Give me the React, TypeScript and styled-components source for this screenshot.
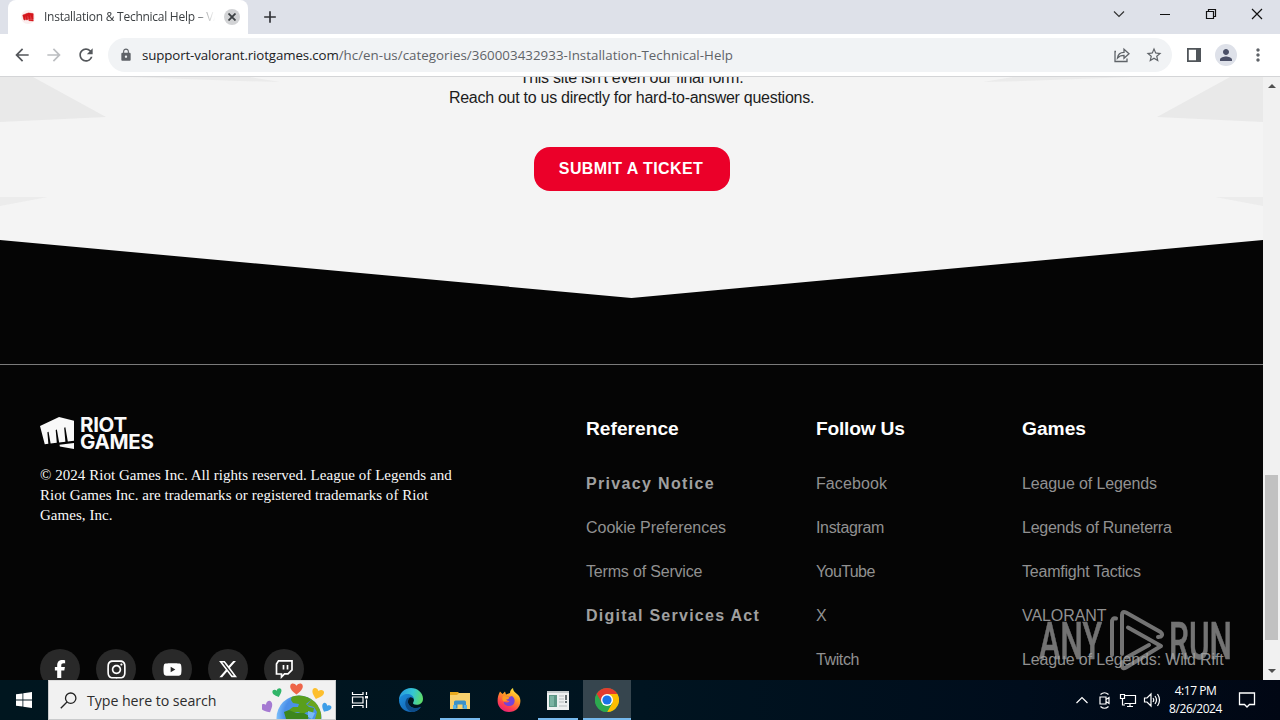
import React from "react";
import styled, { createGlobalStyle } from "styled-components";
import {
  MdArrowBack,
  MdArrowForward,
  MdRefresh,
  MdLock,
  MdStarBorder,
  MdMoreVert,
  MdPerson,
  MdAdd,
} from "react-icons/md";
import { FaFacebookF, FaInstagram, FaYoutube, FaXTwitter } from "react-icons/fa6";

const GlobalStyle = createGlobalStyle`
  * { box-sizing: border-box; }
  body { margin: 0; overflow: hidden; background: #000; }
  svg { display: block; flex: none; }
`;

const sans = `"Liberation Sans", Arial, sans-serif`;
const ui = `"Open Sans", "Noto Sans", sans-serif`;

const Screen = styled.div`
  width: 1280px;
  height: 720px;
  display: flex;
  flex-direction: column;
  overflow: hidden;
  font-family: ${sans};
`;

/* ---------- browser frame ---------- */
const TabStrip = styled.div`
  height: 34px;
  flex: none;
  display: flex;
  align-items: stretch;
  padding-left: 8px;
  background: #dee1e9;
`;
const Tab = styled.div`
  width: 240px;
  display: flex;
  align-items: center;
  padding: 0 8px 0 13px;
  border-radius: 8px 8px 0 0;
  background: #fff;
`;
const TabTitle = styled.div`
  width: 171px;
  margin-left: 9px;
  overflow: hidden;
  white-space: nowrap;
  font: 12px/18px ${ui};
  letter-spacing: -0.26px;
  color: #3c4043;
  mask-image: linear-gradient(90deg, #000 150px, transparent 171px);
`;
const TabClose = styled.div`
  width: 16px;
  height: 16px;
  margin-left: 9px;
  display: grid;
  place-items: center;
  border-radius: 50%;
  background: #d2d3d5;
`;
const NewTab = styled.div`
  width: 44px;
  display: grid;
  place-items: center;
  color: #303236;
`;
const WindowButtons = styled.div`
  margin-left: auto;
  display: grid;
  grid-template-columns: repeat(4, 46px);
  place-items: center;
  padding-bottom: 6px;
`;
const Toolbar = styled.div`
  height: 43px;
  flex: none;
  display: flex;
  align-items: center;
  padding: 0 12px 1px;
  border-bottom: 1px solid #d4d5d7;
  background: #fff;
  color: #5f6368;
`;
const NavButton = styled.div<{ $dim?: boolean }>`
  width: 20px;
  margin-right: 12px;
  display: grid;
  place-items: center;
  color: ${(p) => (p.$dim ? "#bcbec1" : "#54575b")};
`;
const AddressBar = styled.div`
  width: 1064px;
  flex: none;
  height: 34px;
  display: flex;
  align-items: center;
  padding: 0 9px 0 11px;
  border-radius: 17px;
  background: #f1f3f5;
`;
const Url = styled.div`
  flex: 1;
  margin-left: 9px;
  white-space: nowrap;
  font: 13.3px/20px ${ui};
  color: #5f6368;
`;
const UrlHost = styled.span`
  letter-spacing: -0.12px;
  color: #202124;
`;
const UrlPath = styled.span`
  letter-spacing: 0.045px;
`;
const AddressIcons = styled.div`
  display: flex;
  gap: 14px;
`;
const ToolbarIcons = styled.div`
  display: flex;
  align-items: center;
  gap: 12px;
  margin-left: 14px;
`;
const Avatar = styled.div`
  width: 22px;
  height: 22px;
  margin: 0 -1px 0 1px;
  display: grid;
  place-items: center;
  border-radius: 50%;
  background: #dee1e9;
  color: #4b5067;
`;

/* ---------- page ---------- */
const Viewport = styled.div`
  height: 603px;
  flex: none;
  display: flex;
`;
const Page = styled.div`
  position: relative;
  width: 1263px;
  height: 603px;
  overflow: hidden;
  background: #050505;
`;
const Scrollbar = styled.div`
  width: 17px;
  display: flex;
  flex-direction: column;
  align-items: center;
  justify-content: space-between;
  padding: 6px 0;
  background: #f1f1f1;
`;
const ScrollTrack = styled.div`
  flex: 1;
  width: 13px;
  padding-top: 386px;
`;
const ScrollThumb = styled.div`
  height: 165px;
  background: #c1c1c1;
`;
const Contact = styled.section`
  position: relative;
  height: 163px;
  display: flex;
  flex-direction: column;
  align-items: center;
  overflow: hidden;
  background: #f4f4f4;
`;
const Shards = styled.svg`
  position: absolute;
  inset: 0;
`;
const ContactText = styled.p`
  position: relative;
  margin: -9px 0 39px;
  text-align: center;
  font: 16px/20px ${sans};
  letter-spacing: -0.27px;
  color: #1c1c1c;
`;
const TicketButton = styled.button`
  position: relative;
  width: 196px;
  height: 44px;
  padding: 0 1px 0 0;
  border: 0;
  border-radius: 16px;
  background: #eb0029;
  color: #fff;
  font: bold 16px/20px ${sans};
  letter-spacing: 0.4px;
`;
const Chevron = styled.div`
  height: 58px;
  background: #f4f4f4;
  clip-path: polygon(0 0, 100% 0, 50% 100%);
`;
const Footer = styled.footer`
  height: 316px;
  margin-top: 66px;
  padding: 52px 0 0 40px;
  display: grid;
  grid-template-columns: 546px 230px 206px 1fr;
  border-top: 1px solid #7b7b7b;
`;
const Brand = styled.div`
  display: flex;
  flex-direction: column;
`;
const Logo = styled.div`
  display: flex;
  gap: 6px;
  height: 32px;
  color: #f9f9f9;
`;
const LogoText = styled.div`
  margin-top: -1px;
  font: bold 20.5px/17px Inter, ${sans};
  letter-spacing: -0.3px;
  white-space: pre-line;
`;
const Legal = styled.p`
  width: 420px;
  height: 60px;
  margin: 16px 0 124px;
  font: 15px/20px "Liberation Serif", "Times New Roman", serif;
  letter-spacing: 0.04px;
  color: #f9f9f9;
`;
const Socials = styled.div`
  display: flex;
  gap: 16px;
`;
const Social = styled.div`
  width: 40px;
  height: 40px;
  display: grid;
  place-items: center;
  border-radius: 50%;
  background: #292929;
  color: #fff;
`;
const LinkColumn = styled.div`
  display: flex;
  flex-direction: column;
  white-space: nowrap;
`;
const LinkHeading = styled.h3<{ $track?: number }>`
  margin: 0 0 33px;
  font: bold 19.2px/24px ${sans};
  letter-spacing: ${(p) => p.$track ?? 0}px;
  color: #fff;
`;
const FooterLink = styled.a<{ $strong?: boolean; $track?: number }>`
  height: 44px;
  font: ${(p) => (p.$strong ? "bold" : "normal")} 16px/20px ${sans};
  letter-spacing: ${(p) => p.$track ?? 0}px;
  color: ${(p) => (p.$strong ? "#a0a0a0" : "#919191")};
`;
const Watermark = styled.svg`
  position: absolute;
  left: 1030px;
  top: 523px;
  opacity: 0.7;
`;

/* ---------- taskbar ---------- */
const Taskbar = styled.div`
  height: 40px;
  flex: none;
  display: flex;
  background: linear-gradient(90deg, #00161f 0%, #001420 50%, #000d1c 80%, #010714 100%);
`;
const Start = styled.div`
  width: 48px;
  display: grid;
  place-items: center;
`;
const Search = styled.div`
  width: 288px;
  display: flex;
  align-items: center;
  padding-left: 11px;
  border: 1px solid #c9cbcc;
  border-top-color: #dcdcdc;
  background: #f1f1f1;
`;
const SearchText = styled.div`
  width: 175px;
  margin: 1px 0 0 10px;
  font: 14.2px/20px ${ui};
  letter-spacing: -0.06px;
  color: #2d2d2d;
  white-space: nowrap;
`;
const Tasks = styled.div`
  display: flex;
`;
const TaskItem = styled.div<{ $open?: boolean; $active?: boolean }>`
  width: ${(p) => (p.$active ? "48px" : "49px")};
  display: grid;
  place-items: center;
  position: relative;
  background: ${(p) => (p.$active ? "#36454e" : "transparent")};
  &:first-child {
    width: 48px;
    margin-right: 2px;
  }
  &:last-child {
    margin-left: 1px;
  }
  &::after {
    content: "";
    position: absolute;
    left: ${(p) => (p.$active ? "0" : "5px")};
    right: ${(p) => (p.$active ? "0" : "4px")};
    bottom: 0;
    height: 2px;
    background: ${(p) => (p.$open || p.$active ? "#76b9ed" : "transparent")};
  }
`;
const Tray = styled.div`
  margin-left: auto;
  display: flex;
  align-items: center;
  color: #fff;
`;
const TrayIcons = styled.div`
  display: flex;
  align-items: center;
  gap: 6px;
`;
const Clock = styled.div`
  width: 69px;
  text-align: center;
  font: 12px/18px ${ui};
  letter-spacing: -0.45px;
`;
const Notice = styled.div`
  margin: 0 24px 0 8px;
`;

const FIST =
  "M13.458.86 0 7.093l3.353 12.761 2.552-.313-.701-8.024.838-.373 1.447 8.202 4.361-.535-.775-8.857.83-.37 1.591 9.025 4.412-.542-.849-9.708.84-.374 1.74 9.87L24 17.318V3.5Zm.316 19.356.222 1.256L24 23.14v-4.18l-10.22 1.256Z";

const Fist = ({ w, h }: { w: number; h: number }) => (
  <svg width={w} height={h} viewBox="0 .86 24 22.28" preserveAspectRatio="none">
    <path d={FIST} fill="currentColor" />
  </svg>
);

const Favicon = () => (
  <svg width="14" height="14" viewBox="0 0 14 14">
    <circle cx="7" cy="7" r="7" fill="#fbeeee" />
    <svg x="1.500" y="2.500" width="11" height="9" viewBox="0 0 24 24" preserveAspectRatio="none">
      <path d={FIST} fill="#d5161c" stroke="#d5161c" strokeWidth="1.5" />
    </svg>
  </svg>
);

const Earth = () => (
  <svg width="72" height="38" viewBox="0 0 72 38">
    <defs>
      <radialGradient id="sea" cx=".6" cy=".4" r=".6">
        <stop offset="0" stopColor="#4a94ea" />
        <stop offset=".7" stopColor="#4a8fe8" />
        <stop offset="1" stopColor="#7cc0fb" />
      </radialGradient>
      <clipPath id="globe"><circle cx="37" cy="37" r="22.500" /></clipPath>
      <path id="heart" d="M0 5C-5 1-6-1-5.5-3.2-5-5.4-1.6-5.6 0-3 1.6-5.6 5-5.4 5.500-3.200 6-1 5 1 0 5Z" />
    </defs>
    <circle cx="37" cy="37" r="22.500" fill="url(#sea)" />
    <g clipPath="url(#globe)">
      <path d="M30 14H45L49 19 44 23 47 26 52 27 51 32 45 31 41 33 36 31 31 32 27 29 31 26 36 26 37 23 31 22 29 19Z" fill="#5a9f1c" />
      <path d="M45 14C56 18 61 28 59 38L53 38 55 31 52 26 45 24 49 19Z" fill="#6aa51d" />
      <path d="M22 31 27 29 34 32 42 32 47 35 46 38H24Z" fill="#3c861c" />
      <path d="M46 30 53 32 50 38 46 36Z" fill="#79baf5" />
    </g>
    <use href="#heart" transform="translate(34.500 8) scale(1.120)" fill="#ee6549" />
    <use href="#heart" transform="translate(15.500 12) rotate(-18) scale(.820)" fill="#31b568" />
    <use href="#heart" transform="translate(55.500 13) rotate(18) scale(1.050)" fill="#fdbf2d" />
    <use href="#heart" transform="translate(5.500 26.500) rotate(-28) scale(1.080)" fill="#a57ad2" />
    <use href="#heart" transform="translate(64 27) rotate(28) scale(.850)" fill="#3d9ee8" />
  </svg>
);

const TaskView = () => (
  <svg width="18" height="18" viewBox="0 0 18 18" fill="none" stroke="#fff" strokeWidth="1.200">
    <path d="M1.500 1v2.500h10.500V1M1.500 17v-2.500H12V17M1.500 6H12v6H1.500ZM15.500 1v3M15.500 8.500V17" />
    <path d="M14 5h3v2.500h-3z" fill="#fff" stroke="none" />
  </svg>
);

const Edge = () => (
  <svg width="24" height="24" viewBox="0 0 24 24">
    <defs>
      <linearGradient id="edgeTop" x1="0" y1=".3" x2="1" y2=".5">
        <stop offset="0" stopColor="#2799e0" />
        <stop offset=".55" stopColor="#34c5d4" />
        <stop offset="1" stopColor="#5ddc69" />
      </linearGradient>
      <linearGradient id="edgeLow" x1="0" y1="0" x2="1" y2="1">
        <stop offset="0" stopColor="#1b8fdd" />
        <stop offset="1" stopColor="#1257a4" />
      </linearGradient>
    </defs>
    <path d="M0 12C0 5 5.500 0 12 0s12 4.800 12 10.800c0 4-3 6-6.500 6-3 0-4-1.200-3.300-2.300 2-3-.2-6.700-4.200-6.700C5.500 7.800 1 10 0 12Z" fill="url(#edgeTop)" />
    <path d="M0 12C1 7.800 5 6 8.500 6c4 0 6.500 2.500 6.300 5.500C14 9.800 12.500 9 11.300 9.300 7 11 8 19 15 20c3 .4 5.500-.4 7-1.300C20 22 16.500 24 12 24 5 24 0 18.500 0 12Z" fill="url(#edgeLow)" />
    <path d="M7.500 11c-3 5 0 11.500 5.500 12.900 4-.2 7-2.400 9-5.200-4 2.200-9 1.800-11.600-1.200C8.500 15.300 8.300 12 11.300 9.300 9.600 9.300 8.300 10 7.500 11Z" fill="#0d4c88" />
  </svg>
);

const Folder = () => (
  <svg width="22" height="20" viewBox="0 0 22 20">
    <path d="M1 2h8l2 2h10v14H1Z" fill="#e8a91d" />
    <path d="M1 5h7l2-2h11v16H1Z" fill="#f8d06c" />
    <path d="M5 18.500v-6.500q0-1.500 1.500-1.500h9q1.500 0 1.500 1.500v6.500h-3.500V14.500h-5v4Z" fill="#3b91c8" />
    <path d="M4 15h3v4H4zM15 15h3v4h-3z" fill="#59b3e5" />
  </svg>
);

const Firefox = () => (
  <svg width="24" height="24" viewBox="0 0 24 24">
    <defs>
      <linearGradient id="fox" x1=".8" y1="0" x2=".3" y2="1">
        <stop offset="0" stopColor="#fff13e" />
        <stop offset=".4" stopColor="#ff9a24" />
        <stop offset=".75" stopColor="#ff4050" />
        <stop offset="1" stopColor="#e62177" />
      </linearGradient>
    </defs>
    <path d="M3 3.500 5.500 6 8 3.500l1 3L13 5c0-2 1-4 3-5 0 3 2 4 4 6 2 1.500 3.500 4 3.400 7C23.400 19.500 18.500 24 12 24S.6 19 .6 13c0-4 .8-6.500 2.400-9.500Z" fill="url(#fox)" />
    <path d="M7 10c2-1 3-1.500 5-1l3-1c2 1.500 3 3.500 2.500 6-.5 2.500-2.500 4-5.500 4s-5.500-2-5.300-4.500C8 15 11 15 12.500 13 10 13 9 11 7 10Z" fill="#7543d8" />
    <path d="M6 8c2 0 4 .5 6.500 1.500-.5 1.500-2 2-3.500 2L10 13l-3.500.5C5 12 5 10 6 8Z" fill="#ff9b22" />
  </svg>
);

const AppWindow = () => (
  <svg width="22" height="19" viewBox="0 0 22 19">
    <path d="M0 0h22v19H0z" fill="#eef0f0" />
    <path d="M0 0h22v2H0z" fill="#c6cccd" />
    <path d="M2 4h8v12H2z" fill="#5c9685" />
    <path d="M3 5h4v10H3z" fill="#7bb3a2" />
    <path d="M12 5h5M12 8h5M12 11h5M12 15h8" stroke="#b5bbbc" />
    <path d="M19 4v5M19 10v2" stroke="#384447" strokeWidth="1.500" />
  </svg>
);

const Chrome = () => (
  <svg width="24" height="24" viewBox="0 0 24 24">
    <circle cx="12" cy="12" r="12" fill="#2da94f" />
    <path d="M12 12 1.600 6A12 12 0 0 1 22.400 6Z" fill="#e33b2e" />
    <path d="M12 6H22.400A12 12 0 0 1 12 24L17.200 15Z" fill="#fdbd00" />
    <path d="M1.600 6 6.800 15 12 12 12 6Z" fill="#e33b2e" />
    <path d="M1.600 6 6.800 15 12 18 17.200 15 12 24A12 12 0 0 1 1.600 6Z" fill="#2da94f" />
    <circle cx="12" cy="12" r="6" fill="#fff" />
    <circle cx="12" cy="12" r="4.600" fill="#1a73e8" />
  </svg>
);

const Twitch = () => (
  <svg width="20" height="20" viewBox="0 0 20 20" fill="none" stroke="#fff" strokeWidth="1.700">
    <path d="M4.500 1.900H18v9l-4 4h-3.500L7.500 18v-3H2.500V5Z" />
    <path d="M9.500 6v4.500M13.500 6v4.500" />
  </svg>
);

type Item = { label: string; strong?: boolean; track?: number };
const columns: { title: string; track?: number; links: Item[] }[] = [
  {
    title: "Reference",
    links: [
      { label: "Privacy Notice", strong: true, track: 1.34 },
      { label: "Cookie Preferences", track: -0.03 },
      { label: "Terms of Service", track: -0.18 },
      { label: "Digital Services Act", strong: true, track: 1.26 },
    ],
  },
  {
    title: "Follow Us",
    track: -0.22,
    links: [
      { label: "Facebook", track: 0.1 },
      { label: "Instagram", track: -0.35 },
      { label: "YouTube", track: -0.6 },
      { label: "X" },
      { label: "Twitch", track: -0.38 },
    ],
  },
  {
    title: "Games",
    links: [
      { label: "League of Legends", track: -0.12 },
      { label: "Legends of Runeterra", track: -0.26 },
      { label: "Teamfight Tactics", track: -0.22 },
      { label: "VALORANT", track: -0.08 },
      { label: "League of Legends: Wild Rift", track: -0.14 },
    ],
  },
];

export default function App() {
  return (
    <Screen>
      <GlobalStyle />
      <TabStrip>
        <Tab>
          <Favicon />
          <TabTitle>Installation &amp; Technical Help – VALORANT</TabTitle>
          <TabClose>
            <svg width="8" height="8" viewBox="0 0 8 8" stroke="#3c4043" strokeWidth="1.800"><path d="m.5.5 7 7M7.500.5l-7 7" /></svg>
          </TabClose>
        </Tab>
        <NewTab><MdAdd size={20} /></NewTab>
        <WindowButtons>
          <svg width="12" height="12" viewBox="0 0 12 12" fill="none" stroke="#333" strokeWidth="1.200"><path d="m1 3.500 5 5 5-5" /></svg>
          <svg width="12" height="12" viewBox="0 0 12 12" stroke="#111"><path d="M1 6.500h10" /></svg>
          <svg width="12" height="12" viewBox="0 0 12 12" fill="none" stroke="#111" strokeWidth="1.200"><path d="M1.500 3.500h7v7h-7zM3.500 3.500v-2h7v7h-2" /></svg>
          <svg width="12" height="12" viewBox="0 0 12 12" stroke="#111" strokeWidth="1.200"><path d="m1 1 10 10M11 1 1 11" /></svg>
        </WindowButtons>
      </TabStrip>
      <Toolbar>
        <NavButton><MdArrowBack size={20} /></NavButton>
        <NavButton $dim><MdArrowForward size={20} /></NavButton>
        <NavButton><MdRefresh size={20} /></NavButton>
        <AddressBar>
          <MdLock size={14} />
          <Url>
            <UrlHost>support-valorant.riotgames.com</UrlHost>
            <UrlPath>/hc/en-us/categories/360003432933-Installation-Technical-Help</UrlPath>
          </Url>
          <AddressIcons>
            <svg width="18" height="18" viewBox="0 0 18 18" fill="none" stroke="#5f6368" strokeWidth="1.300">
              <path d="M3 5.500H2v10h12v-3M4.500 12c.5-4 3-5.700 6.500-5.700V3.200l5 4.500-5 4.500V9.300c-3 0-4.800.7-6.500 2.700Z" />
            </svg>
            <MdStarBorder size={18} />
          </AddressIcons>
        </AddressBar>
        <ToolbarIcons>
          <svg width="16" height="14" viewBox="0 0 16 14"><path d="M1.900.9h12.200v12.200H1.900z" fill="none" stroke="#50555a" strokeWidth="1.800" /><path d="M10 0h5v14h-5z" fill="#50555a" /></svg>
          <Avatar><MdPerson size={18} /></Avatar>
          <MdMoreVert size={20} />
        </ToolbarIcons>
      </Toolbar>

      <Viewport>
        <Page>
          <Contact>
            <Shards width="1263" height="163" viewBox="0 0 1263 163">
              <g fill="#e9e9e9">
                <path d="M0 0H33L106 40 0 45ZM1263 0H1230L1157 40 1263 45Z" />
                <path d="M0 120H48L0 129ZM1263 120H1215L1263 129Z" fill="#ececec" />
                <path d="M130 0H250L280 5 240 4ZM1133 0H1013L983 5 1023 4Z" fill="#ebebeb" />
              </g>
            </Shards>
            <ContactText>
              This site isn't even our final form.
              <br />
              Reach out to us directly for hard-to-answer questions.
            </ContactText>
            <TicketButton>SUBMIT A TICKET</TicketButton>
          </Contact>
          <Chevron />
          <Footer>
            <Brand>
              <Logo>
                <Fist w={34} h={32} />
                <LogoText>{"RIOT\nGAMES"}</LogoText>
              </Logo>
              <Legal>
                © 2024 Riot Games Inc. All rights reserved. League of Legends and Riot Games Inc. are trademarks or
                registered trademarks of Riot Games, Inc.
              </Legal>
              <Socials>
                <Social><FaFacebookF size={18} /></Social>
                <Social><FaInstagram size={21} /></Social>
                <Social><FaYoutube size={19} /></Social>
                <Social><FaXTwitter size={20} /></Social>
                <Social><Twitch /></Social>
              </Socials>
            </Brand>
            {columns.map((c) => (
              <LinkColumn key={c.title}>
                <LinkHeading $track={c.track}>{c.title}</LinkHeading>
                {c.links.map((l) => (
                  <FooterLink key={l.label} $strong={l.strong} $track={l.track}>{l.label}</FooterLink>
                ))}
              </LinkColumn>
            ))}
          </Footer>
          <Watermark width="210" height="80" viewBox="0 0 210 80">
            <g fill="#a2a2a2" stroke="#a2a2a2" strokeWidth=".6" fontFamily="Roboto, sans-serif" fontSize="52" fontWeight="500">
              <text x="9" y="59" textLength="63" lengthAdjust="spacingAndGlyphs">ANY</text>
              <text x="139" y="59" textLength="63" lengthAdjust="spacingAndGlyphs">RUN</text>
            </g>
            <g fill="none" stroke="#a2a2a2" strokeWidth="4" strokeLinejoin="round" strokeLinecap="round">
              <path d="M86 18.500q-4-1-4 4V55" />
              <path d="M92 54V15q0-4.500 4-2.500L130.500 32q3 2.500.500 4.500l-3 .5" />
              <path d="M98 27.500 131 46 96 67.500q-3.500 2-4-1.500V62" />
              <path d="M96.500 57.500 119 45" />
            </g>
          </Watermark>
        </Page>
        <Scrollbar>
          <svg width="8" height="6" viewBox="0 0 8 6"><path d="M0 5 4 1l4 4Z" fill="#505050" /></svg>
          <ScrollTrack><ScrollThumb /></ScrollTrack>
          <svg width="8" height="6" viewBox="0 0 8 6"><path d="m0 1 4 4 4-4Z" fill="#505050" /></svg>
        </Scrollbar>
      </Viewport>

      <Taskbar>
        <Start>
          <svg width="16" height="16" viewBox="0 0 16 16" fill="#fff"><path d="M0 2.300 6.500 1.400v6.200H0ZM7.300 1.300 16 0v7.600H7.300ZM0 8.400h6.500v6.200L0 13.700ZM7.300 8.400H16V16l-8.700-1.300Z" /></svg>
        </Start>
        <Search>
          <svg width="17" height="17" viewBox="0 0 17 17" fill="none" stroke="#222" strokeWidth="1.300"><circle cx="10.700" cy="6.200" r="5.200" /><path d="M7 10 .8 16.200" /></svg>
          <SearchText>Type here to search</SearchText>
          <Earth />
        </Search>
        <Tasks>
          <TaskItem><TaskView /></TaskItem>
          <TaskItem><Edge /></TaskItem>
          <TaskItem $open><Folder /></TaskItem>
          <TaskItem><Firefox /></TaskItem>
          <TaskItem $open><AppWindow /></TaskItem>
          <TaskItem $active><Chrome /></TaskItem>
        </Tasks>
        <Tray>
          <TrayIcons>
            <svg width="14" height="10" viewBox="0 0 14 10" fill="none" stroke="#fff" strokeWidth="1.200"><path d="m1.500 8 5.500-5.500L12.500 8" /></svg>
            <svg width="18" height="18" viewBox="0 0 18 18" fill="none" stroke="#fff" strokeWidth="1.200"><path d="M5 6h6v7H5zM11 8.500l3-2v6l-3-2M5.500 3.500Q9.500 0 13.500 3.500M5.500 15.500q4 3.500 8 0" /></svg>
            <svg width="18" height="16" viewBox="0 0 18 16" fill="none" stroke="#fff" strokeWidth="1.200"><path d="M5.500 3.500H16.500v8h-11M11 11.500v3M8 14.500h6M1.500 2.500h4v4h-4zM3.500 6.500v6.500H6" /></svg>
            <svg width="18" height="16" viewBox="0 0 18 16" fill="none" stroke="#fff" strokeWidth="1.200"><path d="M1.500 6H4l4-4v12l-4-4H1.500ZM10 6q1.500 2 0 4M12 4q3 4 0 8M14.500 2q4 6 0 12" /></svg>
          </TrayIcons>
          <Clock>4:17 PM<br />8/26/2024</Clock>
          <Notice>
            <svg width="18" height="18" viewBox="0 0 18 18" fill="none" stroke="#fff" strokeWidth="1.300"><path d="M1.500 2h15v11.500h-5L9 16l-2.500-2.500h-5Z" /></svg>
          </Notice>
        </Tray>
      </Taskbar>
    </Screen>
  );
}
